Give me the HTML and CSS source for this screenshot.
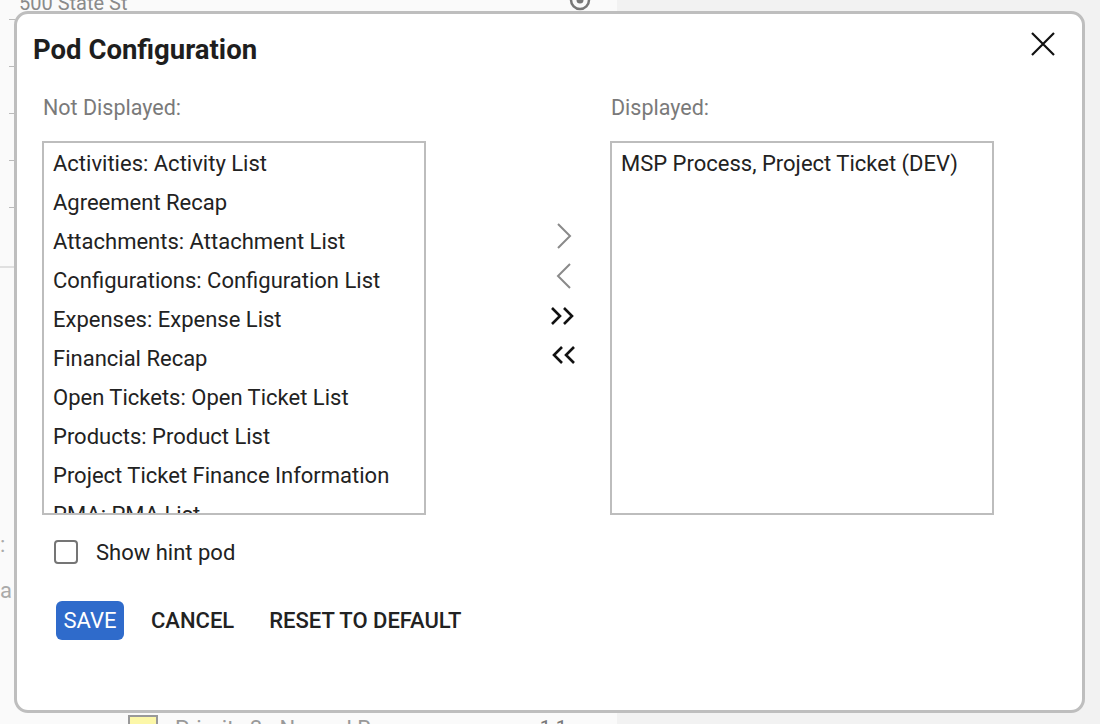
FILE: index.html
```html
<!DOCTYPE html>
<html>
<head>
<meta charset="utf-8">
<link rel="stylesheet" href="styles.css">
</head>
<body>
<div class="page">
  <div class="left-pane">
    <div class="top-card">
      <div class="addr">500 State St</div>
      <svg class="pin" width="26" height="26" viewBox="0 0 26 26"><circle cx="13" cy="6" r="9" fill="none" stroke="#777" stroke-width="2.5"/><circle cx="13" cy="6" r="3.5" fill="#777"/></svg>
      <div class="ticks"><span></span><span></span><span></span><span></span><span></span></div>
    </div>
    <div class="lower">
      <div class="frag f1">:</div>
      <div class="frag f2">a</div>
      <div class="bottom-row">
        <span class="swatch"></span>
        <span class="prio">Priority 3 - Normal Response</span>
        <span class="ratio">1:1</span>
      </div>
    </div>
  </div>
  <div class="right-pane"></div>
</div>

<div class="modal">
  <div class="header">
    <h1 class="title">Pod Configuration</h1>
    <svg class="close" width="26" height="26" viewBox="0 0 26 26"><path d="M2 2 L24 24 M24 2 L2 24" stroke="#111" stroke-width="2.2" fill="none"/></svg>
  </div>

  <div class="columns">
    <div class="col">
      <div class="label">Not Displayed:</div>
      <div class="listbox">
        <div class="item">Activities: Activity List</div>
        <div class="item">Agreement Recap</div>
        <div class="item">Attachments: Attachment List</div>
        <div class="item">Configurations: Configuration List</div>
        <div class="item">Expenses: Expense List</div>
        <div class="item">Financial Recap</div>
        <div class="item">Open Tickets: Open Ticket List</div>
        <div class="item">Products: Product List</div>
        <div class="item">Project Ticket Finance Information</div>
        <div class="item">PMA: PMA List</div>
      </div>
    </div>
    <div class="arrows">
      <svg class="arrow" width="30" height="40" viewBox="0 0 30 40"><polyline points="9,8 21,20 9,32" fill="none" stroke="#8a8a8a" stroke-width="2"/></svg>
      <svg class="arrow" width="30" height="40" viewBox="0 0 30 40"><polyline points="21,8 9,20 21,32" fill="none" stroke="#8a8a8a" stroke-width="2"/></svg>
      <svg class="arrow" width="30" height="40" viewBox="0 0 30 40"><polyline points="3,12 11,20 3,28" fill="none" stroke="#111" stroke-width="2.6"/><polyline points="15,12 23,20 15,28" fill="none" stroke="#111" stroke-width="2.6"/></svg>
      <svg class="arrow" width="30" height="40" viewBox="0 0 30 40"><polyline points="13,11 5,19 13,27" fill="none" stroke="#111" stroke-width="2.6"/><polyline points="25,11 17,19 25,27" fill="none" stroke="#111" stroke-width="2.6"/></svg>
    </div>
    <div class="col">
      <div class="label">Displayed:</div>
      <div class="listbox">
        <div class="item">MSP Process, Project Ticket (DEV)</div>
      </div>
    </div>
  </div>

  <label class="hint">
    <span class="checkbox"></span>
    <span class="hint-text">Show hint pod</span>
  </label>

  <div class="actions">
    <button class="btn primary">SAVE</button>
    <button class="btn">CANCEL</button>
    <button class="btn">RESET TO DEFAULT</button>
  </div>
</div>
</body>
</html>
```

FILE: styles.css
```css
* { box-sizing: border-box; }

html, body {
  margin: 0;
  padding: 0;
  width: 1100px;
  height: 724px;
  overflow: hidden;
  font-family: Roboto, "Liberation Sans", Arial, sans-serif;
  color: #212121;
  background: #f1f1f1;
}

.page {
  display: flex;
  width: 1100px;
  height: 724px;
}

.left-pane {
  width: 617px;
  height: 724px;
  background: #fafafa;
  display: flex;
  flex-direction: column;
  box-shadow: 1px 0 3px rgba(0,0,0,0.06);
}

.right-pane {
  flex: 1;
  background: #f2f2f2;
}

.top-card {
  position: relative;
  height: 268px;
  border-bottom: 2px solid #e0e0e0;
  background: #fafafa;
}

.addr {
  margin: -9px 0 0 19px;
  font-size: 20px;
  color: #8a8a8a;
  line-height: 24px;
}

.pin {
  position: absolute;
  left: 567px;
  top: -6px;
}

.ticks {
  display: flex;
  flex-direction: column;
  gap: 46px;
  margin: 4px 0 0 9px;
}

.ticks span {
  display: block;
  width: 6px;
  height: 1px;
  background: #bbb;
}

.lower {
  flex: 1;
  display: flex;
  flex-direction: column;
  position: relative;
}

.frag {
  font-size: 22px;
  color: #aaa;
  margin-left: 0;
  line-height: 24px;
}

.f1 { margin-top: 265px; }
.f2 { margin-top: 22px; }

.bottom-row {
  margin-top: auto;
  display: flex;
  align-items: flex-start;
  height: 10px;
  padding-left: 128px;
  overflow: visible;
}

.swatch {
  width: 30px;
  height: 26px;
  background: #fcf7a8;
  border: 2px solid #999;
  margin-top: 1px;
}

.prio {
  margin-left: 17px;
  font-size: 22px;
  color: #999;
  line-height: 24px;
  margin-top: 3px;
}

.ratio {
  margin-left: auto;
  margin-right: 50px;
  font-size: 20px;
  color: #777;
  margin-top: 2px;
}

/* Modal */
.modal {
  position: absolute;
  left: 14px;
  top: 11px;
  width: 1071px;
  height: 702px;
  background: #fff;
  border: 3px solid #bebebe;
  border-radius: 14px;
  display: flex;
  flex-direction: column;
}

.header {
  display: flex;
  justify-content: space-between;
  align-items: flex-start;
  padding: 0 26px 0 16px;
}

.title {
  margin: 21px 0 0 0;
  font-size: 27.5px;
  line-height: 30px;
  font-weight: 700;
  color: #1e1e1e;
}

.close {
  margin-top: 17px;
}

.columns {
  display: grid;
  grid-template-columns: 384px 184px 384px;
  padding-left: 25px;
  margin-top: 31px;
}

.label {
  font-size: 21.5px;
  line-height: 24px;
  color: #7a7a7a;
  margin-left: 1px;
}

.listbox {
  margin-top: 21px;
  height: 374px;
  border: 2px solid #bdbdbd;
  overflow: hidden;
  padding: 1px 0 0 9px;
}

.item {
  font-size: 22px;
  line-height: 39px;
  color: #222;
  white-space: nowrap;
}

.arrows {
  display: flex;
  flex-direction: column;
  align-items: center;
  width: 30px;
  margin-left: 123px;
  padding-top: 120px;
}

.arrow {
  display: block;
}

.hint {
  display: flex;
  align-items: center;
  margin: 24px 0 0 37px;
  height: 26px;
}

.checkbox {
  width: 24px;
  height: 24px;
  border: 2px solid #757575;
  border-radius: 4px;
}

.hint-text {
  margin-left: 18px;
  font-size: 22px;
  color: #222;
}

.actions {
  display: flex;
  align-items: center;
  margin: 36px 0 0 39px;
  gap: 27px;
}

.btn {
  font-family: Roboto, "Liberation Sans", Arial, sans-serif;
  font-size: 22px;
  font-weight: 500;
  background: none;
  border: none;
  padding: 0;
  color: #222;
  height: 39px;
  line-height: 39px;
  letter-spacing: 0;
}

.btn.primary {
  background: #2f6bcb;
  color: #fff;
  border-radius: 6px;
  padding: 0 7px;
  width: 68px;
  font-weight: 400;
}

.actions .btn:nth-child(3) {
  margin-left: 8px;
}
```
